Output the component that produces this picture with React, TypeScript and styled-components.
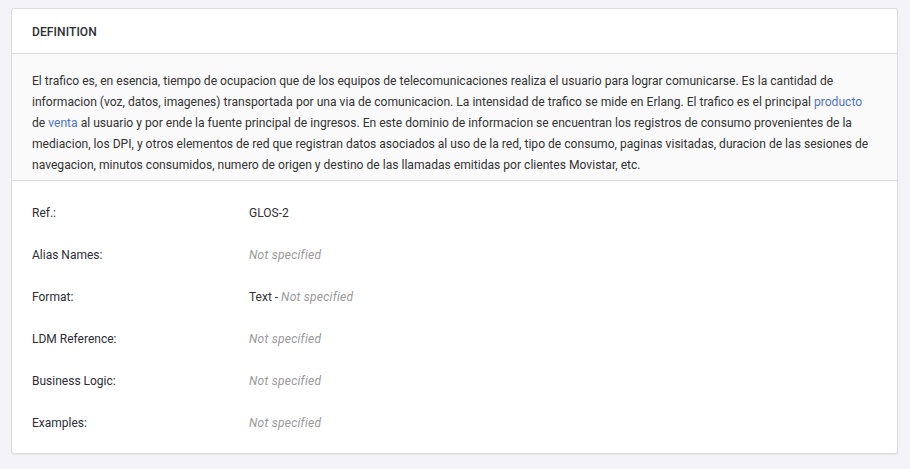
import React from "react";
import styled, { createGlobalStyle } from "styled-components";

const Global = createGlobalStyle`
  html, body { margin: 0; padding: 0; background: #f4f4f8; }
  body { font-family: Roboto, "Liberation Sans", Arial, sans-serif; color: #333; }
`;

const Page = styled.div`
  padding: 8px 12px 15px 11px;
`;

const Card = styled.section`
  background: #fff;
  border: 1px solid #dcdcdf;
  border-radius: 3px;
  box-shadow: 0 1px 1px rgba(0,0,0,0.06);
  overflow: hidden;
`;

const Header = styled.header`
  height: 42px;
  padding: 2px 20px 0;
  display: flex;
  align-items: center;
  border-bottom: 1px solid #dedee2;
  font-size: 12px;
  font-weight: 500;
  letter-spacing: 0.1px;
  color: #2d2d33;
`;

const Definition = styled.div`
  background: #fafafa;
  border-bottom: 1px solid #dedee2;
  padding: 17px 20px 4px 20px;
  font-size: 12.1px;
  line-height: 21px;
  color: #333;
`;

const Link = styled.a`
  color: #4f74c2;
  text-decoration: none;
`;

const List = styled.div`
  padding: 11px 0 9px;
`;

const Row = styled.div`
  display: grid;
  grid-template-columns: 217px 1fr;
  height: 42px;
  align-items: center;
  padding: 0 20px;
  font-size: 12px;
`;

const Label = styled.span`
  color: #2d2d33;
`;

const Value = styled.span`
  color: #333;
`;

const Muted = styled.span`
  color: #999;
  font-style: italic;
  letter-spacing: 0.25px;
`;

const rows: { label: string; value: React.ReactNode }[] = [
  { label: "Ref.:", value: "GLOS-2" },
  { label: "Alias Names:", value: <Muted>Not specified</Muted> },
  { label: "Format:", value: <>Text - <Muted>Not specified</Muted></> },
  { label: "LDM Reference:", value: <Muted>Not specified</Muted> },
  { label: "Business Logic:", value: <Muted>Not specified</Muted> },
  { label: "Examples:", value: <Muted>Not specified</Muted> },
];

export default function App() {
  return (
    <>
      <Global />
      <Page>
        <Card>
          <Header>DEFINITION</Header>
          <Definition>
            El trafico es, en esencia, tiempo de ocupacion que de los equipos de telecomunicaciones realiza el usuario para lograr comunicarse. Es la cantidad de informacion (voz, datos, imagenes) transportada por una via de comunicacion. La intensidad de trafico se mide en Erlang. El trafico es el principal{" "}
            <Link href="#">producto</Link> de <Link href="#">venta</Link> al usuario y por ende la fuente principal de ingresos. En este dominio de informacion se encuentran los registros de consumo provenientes de la mediacion, los DPI, y otros elementos de red que registran datos asociados al uso de la red, tipo de consumo, paginas visitadas, duracion de las sesiones de navegacion, minutos consumidos, numero de origen y destino de las llamadas emitidas por clientes Movistar, etc.
          </Definition>
          <List>
            {rows.map((r) => (
              <Row key={r.label}>
                <Label>{r.label}</Label>
                <Value>{r.value}</Value>
              </Row>
            ))}
          </List>
        </Card>
      </Page>
    </>
  );
}
